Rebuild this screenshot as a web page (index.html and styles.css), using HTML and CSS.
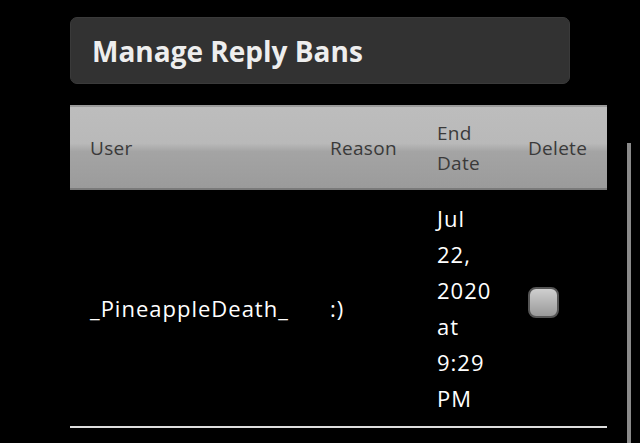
FILE: index.html
```html
<!DOCTYPE html>
<html lang="en">
<head>
    <meta charset="UTF-8">
    <meta name="viewport" content="width=device-width, initial-scale=1.0">
    <title>Manage Reply Bans</title>
    <link rel="stylesheet" href="styles.css">
</head>
<body>
    <div class="page">
        <div class="panel">
            <h2>Manage Reply Bans</h2>
        </div>

        <table class="bans">
            <thead>
                <tr>
                    <th class="col-user">User</th>
                    <th class="col-reason">Reason</th>
                    <th class="col-date">End Date</th>
                    <th class="col-delete">Delete</th>
                </tr>
            </thead>
            <tbody>
                <tr>
                    <td>_PineappleDeath_</td>
                    <td>:)</td>
                    <td class="date">Jul 22, 2020 at 9:29 PM</td>
                    <td><input type="checkbox" class="check"></td>
                </tr>
            </tbody>
        </table>
    </div>
    <div class="scrollbar"></div>
</body>
</html>
```

FILE: styles.css
```css
body {
    margin: 0;
    padding: 0;
    background: #000;
    font-family: "Open Sans", sans-serif;
    color: #fff;
}
.page {
    padding: 17px 33px 0 70px;
}
.panel {
    width: 500px;
    box-sizing: border-box;
    height: 67px;
    padding: 0 21px;
    display: flex;
    align-items: center;
    background-color: #323232;
    border: 1px solid #3a3a3a;
    border-radius: 7px;
}
.panel h2 {
    margin: 0;
    font-size: 28px;
    font-weight: 700;
    color: #eee;
}
.bans {
    margin-top: 21px;
    width: 537px;
    border-collapse: collapse;
    table-layout: fixed;
}
.bans th {
    height: 81px;
    padding: 0 20px;
    text-align: left;
    font-size: 19px;
    font-weight: 400;
    letter-spacing: 0.3px;
    line-height: 30px;
    color: #3a3a3a;
    background: linear-gradient(#bdbdbd 0%, #b9b9b9 45%, #a4a4a4 55%, #9b9b9b 100%);
    border-top: 2px solid #9a9a9a;
    border-bottom: 2px solid #7a7a7a;
}
.col-user { width: 200px; }
.col-reason { width: 67px; }
.col-date { width: 51px; }
.col-delete { width: 59px; }
.bans td {
    padding: 10px 20px;
    font-size: 22px;
    letter-spacing: 1px;
    line-height: 36px;
    border-bottom: 2px solid #ddd;
}
.check {
    appearance: none;
    margin: 0 0 12px;
    display: block;
    width: 31px;
    height: 31px;
    box-sizing: border-box;
    border: 2px solid #555;
    border-radius: 8px;
    background: linear-gradient(#cfcfcf, #999);
}
.scrollbar {
    position: absolute;
    left: 627px;
    top: 143px;
    width: 4px;
    height: 300px;
    background: #8a8a8a;
}
```
